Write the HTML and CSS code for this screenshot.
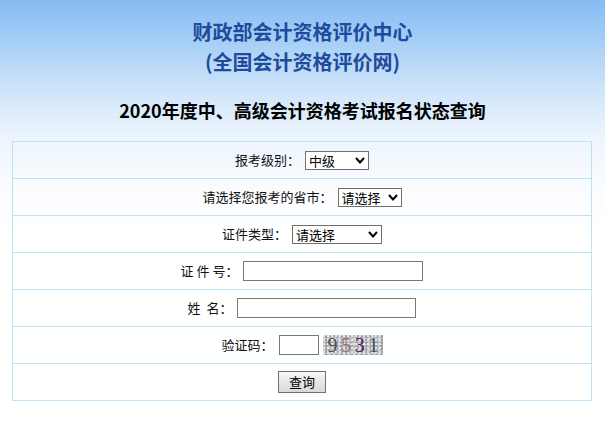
FILE: index.html
```html
<!DOCTYPE html>
<html lang="zh-CN">
<head>
<meta charset="utf-8">
<title>2020年度中、高级会计资格考试报名状态查询</title>
<link rel="stylesheet" href="styles.css">
</head>
<body>
<div class="header">
  <h1 class="org">财政部会计资格评价中心<br>(全国会计资格评价网)</h1>
  <h2 class="title">2020年度中、高级会计资格考试报名状态查询</h2>
</div>
<div class="form">
  <div class="row">
    <span class="label">报考级别<span class="colon">：</span></span>
    <span class="sel w64"><select><option>中级</option><option>高级</option></select><svg class="chev" width="10" height="7" viewBox="0 0 10 7"><polyline points="1,1 5,5.5 9,1" fill="none" stroke="#000" stroke-width="2"/></svg></span>
  </div>
  <div class="row">
    <span class="label">请选择您报考的省市<span class="colon">：</span></span>
    <span class="sel w64"><select><option>请选择</option></select><svg class="chev" width="10" height="7" viewBox="0 0 10 7"><polyline points="1,1 5,5.5 9,1" fill="none" stroke="#000" stroke-width="2"/></svg></span>
  </div>
  <div class="row">
    <span class="label">证件类型<span class="colon">：</span></span>
    <span class="sel w90"><select><option>请选择</option></select><svg class="chev" width="10" height="7" viewBox="0 0 10 7"><polyline points="1,1 5,5.5 9,1" fill="none" stroke="#000" stroke-width="2"/></svg></span>
  </div>
  <div class="row">
    <span class="label">证&nbsp;件&nbsp;号<span class="colon">：</span></span>
    <input class="txt w180" type="text">
  </div>
  <div class="row">
    <span class="label">姓&nbsp;&nbsp;名<span class="colon">：</span></span>
    <input class="txt w179" type="text">
  </div>
  <div class="row">
    <span class="label">验证码<span class="colon">：</span></span>
    <input class="txt w40" type="text">
    <span class="captcha"><span class="d1">9</span><span class="d2">5</span><span class="d3">3</span><span class="d4">1</span></span>
  </div>
  <div class="row">
    <button class="btn" type="button">查询</button>
  </div>
</div>
</body>
</html>
```
FILE: styles.css
```css
html, body {
  margin: 0;
  padding: 0;
}
body {
  width: 605px;
  min-height: 429px;
  font-family: "Noto Sans CJK SC", "Liberation Sans", sans-serif;
  font-size: 13px;
  color: #111;
  background: #fff linear-gradient(180deg, #86bcf3 0px, #a9d0f6 45px, #d2e6fa 95px, #eef5fd 140px, #fafcff 190px, #ffffff 230px) no-repeat;
  background-size: 100% 240px;
}
.header {
  padding-top: 17px;
  text-align: center;
}
.org {
  margin: 0;
  font-size: 20px;
  line-height: 30px;
  font-weight: bold;
  color: #1e4b9b;
}
.title {
  margin: 22px 0 0;
  font-size: 18px;
  line-height: 22px;
  font-weight: bold;
  color: #000;
}
.form {
  margin: 20px 12px 0;
  width: 578px;
  border: 1px solid #bfe2f2;
  border-bottom: none;
}
.row {
  height: 36px;
  border-bottom: 1px solid #bfe2f2;
  display: flex;
  justify-content: center;
  align-items: center;
  gap: 5px;
}
.label {
  font-size: 13px;
  line-height: 18px;
  color: #111;
}
.colon {
  font-family: "Noto Sans CJK TC", "Noto Sans CJK SC", sans-serif;
}
.sel {
  position: relative;
  display: inline-block;
  height: 19px;
}
.sel select {
  appearance: none;
  -webkit-appearance: none;
  height: 19px;
  box-sizing: border-box;
  border: 1px solid #707070;
  border-radius: 0;
  background: #fff;
  font-family: "Noto Sans CJK SC", "Liberation Sans", sans-serif;
  font-size: 13px;
  line-height: 16px;
  padding: 0 0 0 3px;
  margin: 0;
  color: #000;
}
.w64 select { width: 64px; }
.w90 select { width: 90px; }
.chev {
  position: absolute;
  right: 4px;
  top: 6px;
  pointer-events: none;
}
.txt {
  box-sizing: border-box;
  height: 20px;
  border: 1px solid #777;
  border-radius: 0;
  padding: 0 2px;
  margin: 0;
  background: #fff;
}
.w180 { width: 180px; }
.w179 { width: 179px; }
.w40 { width: 40px; margin-right: -1px; }
.captcha {
  display: inline-flex;
  align-items: center;
  justify-content: space-between;
  width: 60px;
  height: 20px;
  box-sizing: border-box;
  padding: 0 4px 0 5px;
  background-color: #c2c2c6;
  background-image:
    radial-gradient(circle at 20% 30%, #e4e4e8 0 1px, transparent 1.5px),
    radial-gradient(circle at 70% 60%, #9a9aa0 0 1px, transparent 1.5px),
    radial-gradient(circle at 40% 80%, #dadade 0 1px, transparent 1.5px),
    radial-gradient(circle at 85% 20%, #a6a6ac 0 1px, transparent 1.5px);
  background-size: 4px 4px, 5px 3px, 3px 5px, 6px 4px;
  font-family: "Liberation Serif", "DejaVu Serif", serif;
  font-size: 20px;
  line-height: 20px;
}
.d1 { color: #4a5448; }
.d2 { color: #9a6d6a; }
.d3 { color: #4a1d5c; }
.d4 { color: #2f5450; }
.btn {
  width: 48px;
  height: 22px;
  box-sizing: border-box;
  border: 1px solid #707070;
  border-radius: 0;
  background: linear-gradient(180deg, #f6f6f6 0%, #e6e6e6 55%, #d9d9d9 100%);
  font-family: "Noto Sans CJK SC", "Liberation Sans", sans-serif;
  font-size: 13px;
  line-height: 18px;
  color: #000;
  padding: 0;
  margin: 0;
}
```
